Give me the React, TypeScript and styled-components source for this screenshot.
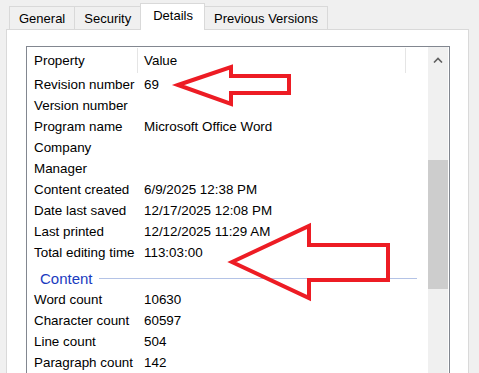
import React from "react";
import styled, { createGlobalStyle } from "styled-components";

const GlobalStyle = createGlobalStyle`
  html, body {
    margin: 0;
    padding: 0;
    background: #f0f0f0;
    overflow: hidden;
  }
  body {
    font-family: "Liberation Sans", Arial, sans-serif;
    font-size: 13.4px;
    color: #000;
  }
`;

type Row = { name: string; value?: string };

const summary: Row[] = [
  { name: "Revision number", value: "69" },
  { name: "Version number" },
  { name: "Program name", value: "Microsoft Office Word" },
  { name: "Company" },
  { name: "Manager" },
  { name: "Content created", value: "6/9/2025 12:38 PM" },
  { name: "Date last saved", value: "12/17/2025 12:08 PM" },
  { name: "Last printed", value: "12/12/2025 11:29 AM" },
  { name: "Total editing time", value: "113:03:00" },
];

const content: Row[] = [
  { name: "Word count", value: "10630" },
  { name: "Character count", value: "60597" },
  { name: "Line count", value: "504" },
  { name: "Paragraph count", value: "142" },
];

const tabs = ["General", "Security", "Details", "Previous Versions"];

const App = () => {
  return (
    <Window>
      <GlobalStyle />
      <TabStrip>
        {tabs.map((t) => (
          <Tab key={t} $active={t === "Details"}>
            {t}
          </Tab>
        ))}
      </TabStrip>
      <Panel>
        <ListBox>
          <Table>
            <HeaderRow>
              <HeaderCell $first>Property</HeaderCell>
              <HeaderCell>Value</HeaderCell>
            </HeaderRow>
            {summary.map((r) => (
              <DataRow key={r.name}>
                <NameCell>{r.name}</NameCell>
                <ValueCell>{r.value}</ValueCell>
              </DataRow>
            ))}
            <GroupRow>
              <GroupLabel>Content</GroupLabel>
              <GroupLine />
            </GroupRow>
            {content.map((r) => (
              <DataRow key={r.name}>
                <NameCell>{r.name}</NameCell>
                <ValueCell>{r.value}</ValueCell>
              </DataRow>
            ))}
          </Table>
          <ScrollBar>
            <ScrollButton>
              <svg width="10" height="6" viewBox="0 0 10 6">
                <path d="M1 5.5 L5 1.5 L9 5.5" stroke="#606060" strokeWidth="1.6" fill="none" />
              </svg>
            </ScrollButton>
            <ScrollThumb />
          </ScrollBar>
        </ListBox>
      </Panel>
      <Overlay width="479" height="373" viewBox="0 0 479 373">
        <path d="M178 85 L231 67 L231 76 L289 76 L289 93 L231 93 L231 104 Z" />
        <path d="M232 262 L309 226 L309 245 L388 245 L388 280 L309 280 L309 298 Z" />
      </Overlay>
    </Window>
  );
};

export default App;

const Window = styled.div`
  position: relative;
  width: 479px;
  height: 373px;
  overflow: hidden;
`;

const TabStrip = styled.div`
  display: flex;
  align-items: flex-end;
  height: 29px;
  padding-left: 9px;
`;

const Tab = styled.div<{ $active?: boolean }>`
  position: relative;
  z-index: ${({ $active }) => ($active ? 2 : 1)};
  box-sizing: border-box;
  height: ${({ $active }) => ($active ? "27px" : "23px")};
  margin-bottom: ${({ $active }) => ($active ? "-1px" : "0")};
  margin-right: -1px;
  padding: ${({ $active }) => ($active ? "4px 11px 0 12px" : "4px 9px 0 9px")};
  background: ${({ $active }) => ($active ? "#ffffff" : "#f0f0f0")};
  border: 1px solid #d9d9d9;
  border-bottom: none;
  white-space: nowrap;
  font-size: 13px;
  line-height: 16px;
`;

const Panel = styled.div`
  box-sizing: border-box;
  width: 463px;
  height: 360px;
  margin-left: 6px;
  padding: 16px 18px 0 19px;
  background: #ffffff;
  border: 1px solid #d9d9d9;
`;

const ListBox = styled.div`
  box-sizing: border-box;
  display: flex;
  width: 424px;
  height: 400px;
  border: 1px solid #828790;
`;

const Table = styled.div`
  flex: 1;
  display: flex;
  flex-direction: column;
`;

const HeaderRow = styled.div`
  display: flex;
  height: 27px;
  align-items: stretch;
`;

const HeaderCell = styled.div<{ $first?: boolean }>`
  box-sizing: border-box;
  width: ${({ $first }) => ($first ? "111px" : "268px")};
  padding-left: ${({ $first }) => ($first ? "7px" : "6px")};
  margin: 1px 0;
  border-right: 1px solid #e5e5e5;
  line-height: 25px;
`;

const DataRow = styled.div`
  display: flex;
  height: 21px;
  line-height: 21px;
  white-space: nowrap;
`;

const NameCell = styled.div`
  box-sizing: border-box;
  width: 110px;
  padding-left: 7px;
`;

const ValueCell = styled.div`
  padding-left: 7px;
`;

const GroupRow = styled.div`
  display: flex;
  align-items: center;
  height: 26px;
  padding: 4px 11px 0 13px;
  box-sizing: border-box;
`;

const GroupLabel = styled.span`
  color: #1a3bc0;
  font-size: 15px;
`;

const GroupLine = styled.div`
  flex: 1;
  height: 1px;
  margin-left: 6px;
  background: #b4c3e6;
`;

const ScrollBar = styled.div`
  width: 20px;
  margin-right: 1px;
  display: flex;
  flex-direction: column;
  background: #f0f0f0;
`;

const ScrollButton = styled.div`
  height: 24px;
  display: flex;
  align-items: center;
  justify-content: center;
  padding-top: 1px;
`;

const ScrollThumb = styled.div`
  height: 129px;
  margin-top: 88px;
  background: #cdcdcd;
`;

const Overlay = styled.svg`
  position: absolute;
  left: 0;
  top: 0;
  pointer-events: none;

  path {
    fill: none;
    stroke: #ed1c24;
    stroke-width: 4;
    stroke-linejoin: miter;
  }
`;
